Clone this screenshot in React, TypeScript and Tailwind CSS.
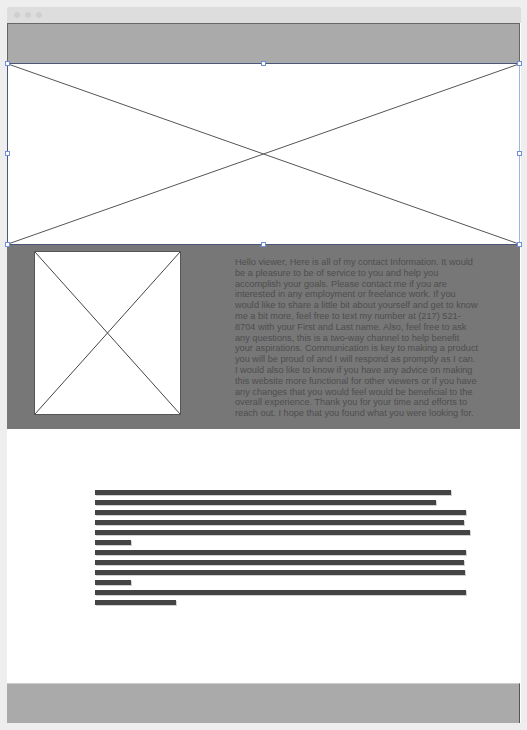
import React from "react";

const paraA =
  "Hello viewer, Here is all of my contact Information. It would be a pleasure to be of service to you and help you accomplish your goals. Please contact me if you are interested in any employment or freelance work. If you would like to share a little bit about yourself and get to know me a bit more, feel free to text my number at (217) 521-8704 with your First and Last name. Also, feel free to ask any questions, this is a two-way channel to help benefit";
const paraB =
  "your aspirations. Communication is key to making a product you will be proud of and I will respond as promptly as I can. I would also like to know if you have any advice on making this website more functional for other viewers or if you have any changes that you would feel would be beneficial to the overall experience. Thank you for your time and efforts to reach out. I hope that you found what you were looking for.";

// widths of the placeholder text bars
const bars = [356, 341, 371, 369, 375, 36, 371, 369, 370, 36, 371, 81];

const Cross = ({ color }: { color: string }) => (
  <svg
    className="absolute inset-0 h-full w-full"
    viewBox="0 0 100 100"
    preserveAspectRatio="none"
  >
    <line x1="0" y1="0" x2="100" y2="100" stroke={color} strokeWidth="1" vectorEffect="non-scaling-stroke" />
    <line x1="100" y1="0" x2="0" y2="100" stroke={color} strokeWidth="1" vectorEffect="non-scaling-stroke" />
  </svg>
);

const Handle = ({ className }: { className: string }) => (
  <div
    className={
      "absolute h-[5px] w-[5px] border border-[#6f8fd8] bg-white " + className
    }
  />
);

const App = () => {
  return (
    <div className="h-[730px] w-[527px] bg-[#eeeeee] px-[7px] pt-[7px] font-['Liberation_Sans',Arial,sans-serif]">
      <div className="w-[514px] bg-white">
        {/* title bar */}
        <div className="flex h-4 items-center gap-[5px] rounded-t-[2px] bg-[#dddddd] pl-[7px]">
          <span className="h-[6px] w-[6px] rounded-full bg-[#d0d0d0]" />
          <span className="h-[6px] w-[6px] rounded-full bg-[#d0d0d0]" />
          <span className="h-[6px] w-[6px] rounded-full bg-[#d0d0d0]" />
        </div>

        {/* header */}
        <div className="h-10 w-[513px] border-x border-t border-[#666666] bg-[#aaaaaa]" />

        {/* hero image */}
        <div className="relative h-[182px] w-[513px] border border-[#4b5679] border-r-[#9fb4e6] bg-white">
          <Cross color="#555555" />
          <Handle className="-left-[3px] -top-[3px]" />
          <Handle className="left-[253px] -top-[3px]" />
          <Handle className="-right-[3px] -top-[3px]" />
          <Handle className="-left-[3px] top-[87px]" />
          <Handle className="-right-[3px] top-[87px]" />
          <Handle className="-bottom-[3px] -left-[3px]" />
          <Handle className="-bottom-[3px] left-[253px]" />
          <Handle className="-bottom-[3px] -right-[3px]" />
        </div>

        {/* contact section */}
        <div className="flex h-[184px] w-[513px] bg-[#777777] pt-[6px]">
          <div className="ml-[27px] relative h-[164px] w-[147px] border border-[#555555] bg-white">
            <Cross color="#444444" />
          </div>
          <p className="ml-[54px] mt-[6px] w-[245px] text-[9.2px] leading-[10.8px] text-[#4e4e4e]">
            {paraA}
            <br />
            {paraB}
          </p>
        </div>

        {/* text block */}
        <div className="flex h-[254px] w-[513px] flex-col gap-[5px] pl-[88px] pt-[61px]">
          {bars.map((w, i) => (
            <div
              key={i}
              className="h-[5px] bg-[#444444] shadow-[1px_1px_0_#d0d0d0]"
              style={{ width: w }}
            />
          ))}
        </div>

        {/* footer */}
        <div className="h-10 w-[513px] border-r border-t border-r-[#555555] border-t-[#cccccc] bg-[#aaaaaa]" />
      </div>
    </div>
  );
};

export default App;
